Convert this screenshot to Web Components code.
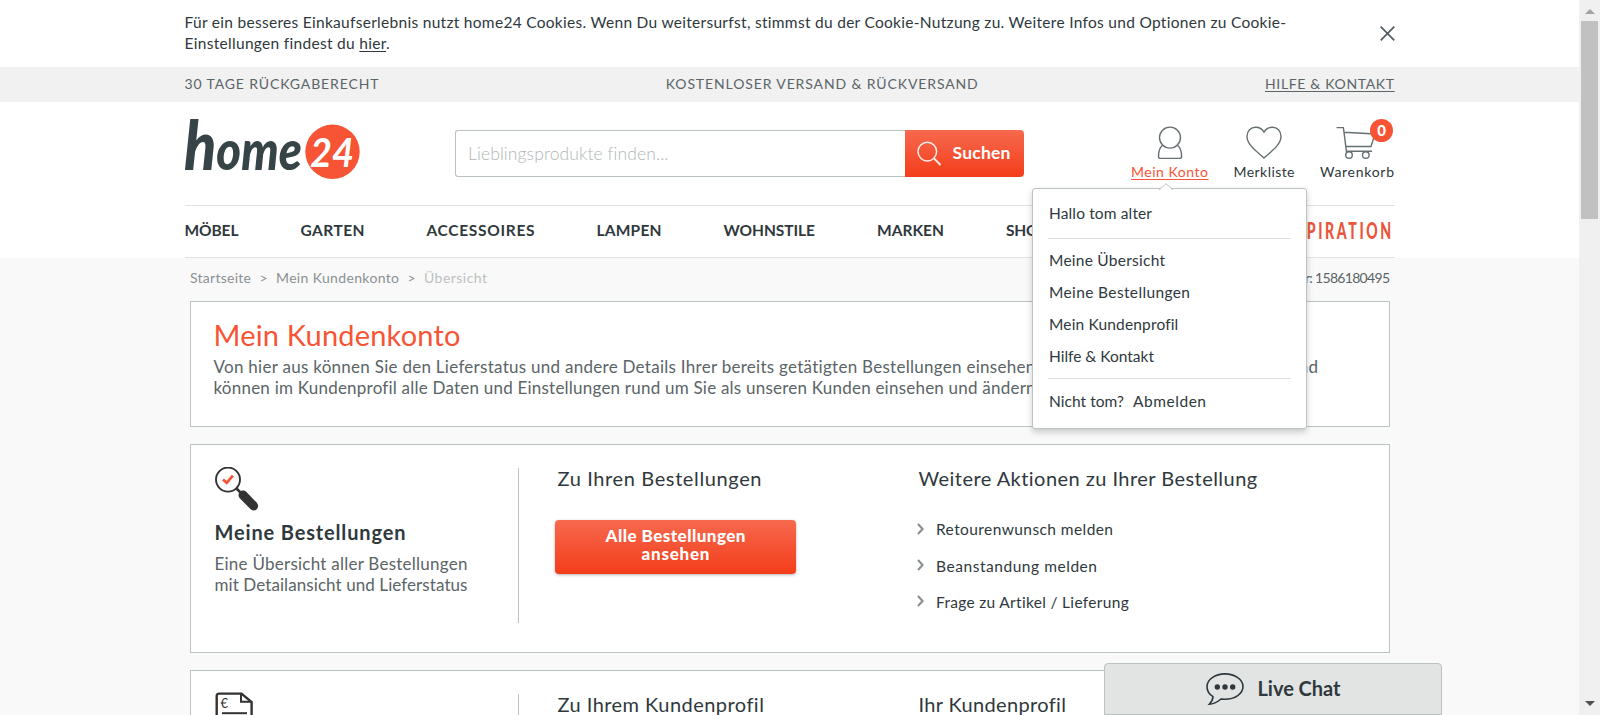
<!DOCTYPE html>
<html lang="de">
<head>
<meta charset="utf-8">
<title>home24 – Mein Kundenkonto</title>
<style>
html,body{margin:0;height:100%;overflow:hidden}
body{font-family:Lato,"Open Sans",sans-serif;color:#2f383c;background:#f9f9f9;font-size:15.5px}
</style>
</head>
<body>
<shop-page></shop-page>
<script>
function element(name, html, init){
  const t=document.createElement('template');
  t.innerHTML=html;
  customElements.define(name, class extends HTMLElement{
    constructor(){super();this.attachShadow({mode:'open'}).appendChild(t.content.cloneNode(true));}
    connectedCallback(){if(init)init(this,this.shadowRoot);}
  });
}

element('shop-page', `
<style>
:host{display:flex;height:715px;overflow:hidden}
main{flex:1;min-width:0;height:715px;overflow:hidden}
live-chat{position:absolute;left:1104px;top:663px}
</style>
<main><cookie-bar></cookie-bar><usp-bar></usp-bar><shop-header></shop-header><shop-nav></shop-nav><account-page></account-page></main>
<page-scrollbar></page-scrollbar>
<live-chat></live-chat>`);

element('page-scrollbar', `
<style>
:host{display:flex;flex-direction:column;align-items:center;justify-content:space-between;width:21px;height:715px;background:#f0f0f0}
.up,.down{width:0;height:0;border:5px solid transparent}
.up{border-top:0;border-bottom-color:#a3a3a3;margin-top:9px}
.down{border-bottom:0;border-top-color:#505050;margin-bottom:9px}
.track{flex:1;padding-top:7px}.thumb{width:17px;height:198px;background:#c1c1c1}
</style><div class="up"></div><div class="track"><div class="thumb"></div></div><div class="down"></div>`);

element('cookie-bar', `
<style>
:host{display:flex;justify-content:space-between;height:67px;box-sizing:border-box;padding:12px 184px 0 184.5px;background:#fff;line-height:21px}
a{text-decoration:underline;text-underline-offset:2px}
svg{margin-top:14px}
</style>
<div><fit-text w="1102">Für ein besseres Einkaufserlebnis nutzt home24 Cookies. Wenn Du weitersurfst, stimmst du der Cookie-Nutzung zu. Weitere Infos und Optionen zu Cookie-</fit-text>
<fit-text w="205">Einstellungen findest du <a>hier</a>.</fit-text></div>
<svg width="15" height="15" viewBox="0 0 15 15"><path d="M.7.7 14.3 14.3M14.3.7.7 14.3" stroke="#535c60" stroke-width="1.7"/></svg>`);

element('usp-bar', `
<style>
:host{display:flex;justify-content:space-between;height:35px;background:#f1f1f1;padding:0 185px 0 184.5px;line-height:34px;font-size:14px;color:#5b6467}
.help{text-decoration:underline;text-underline-offset:2px}
</style>
<fit-text w="194">30 TAGE RÜCKGABERECHT</fit-text><fit-text w="312">KOSTENLOSER VERSAND &amp; RÜCKVERSAND</fit-text><fit-text class="help" w="129">HILFE &amp; KONTAKT</fit-text>`);

element('shop-logo', `
<style>:host{display:block;width:180px;height:80px}svg{overflow:visible}text{font-family:Lato,sans-serif;font-style:italic}</style>
<svg width="180" height="80" viewBox="0 0 180 80">
<text transform="translate(-1,59.5)" fill="#364347" font-weight="900" font-size="55" textLength="118" lengthAdjust="spacingAndGlyphs"><tspan font-size="69">h</tspan>ome</text>
<circle cx="147.500" cy="41.800" r="27.200" fill="#f75435"/>
<text x="125" y="57" font-size="41" font-weight="700" fill="#fff" textLength="44" lengthAdjust="spacingAndGlyphs">24</text>
</svg>`);

element('search-box', `
<style>
:host{display:flex;width:569px;height:47px;line-height:45px}
.in{flex:1;border:1px solid #b9c2c1;border-right:0;border-radius:3px 0 0 3px;padding-left:12px;font-size:17.5px;color:#b0b5b6;font-weight:300}
button{all:unset;box-sizing:border-box;width:119px;display:flex;background:linear-gradient(#f7694e,#f33d1a);border-radius:0 4px 4px 0;color:#fff;font-weight:700;font-size:17.5px;line-height:46px;padding-left:11.5px}
button fit-text{margin-left:11px}svg{margin-top:11px}
</style>
<div class="in"><fit-text w="200">Lieblingsprodukte finden...</fit-text></div>
<button><svg width="25" height="25" viewBox="0 0 25 25" fill="none" stroke="#fff" stroke-width="1.5" opacity=".9"><circle cx="10.3" cy="10.6" r="9.3"/><path d="m17 17.3 6.5 6.7" stroke-width="1.9"/></svg><fit-text w="58">Suchen</fit-text></button>`);

element('header-action', `
<style>
:host{display:flex;flex-direction:column;align-items:center;position:relative;font-size:14px;line-height:18px}
.icon{height:39px}
</style><div class="icon"><slot name="icon"></slot></div><slot></slot><slot name="menu"></slot>`);

element('account-menu', `
<style>
:host{position:absolute;left:-99px;top:64px;width:275px;height:241px;box-sizing:border-box;border:1px solid #bcc4c3;border-radius:3px;background:#fff;box-shadow:0 3px 6px rgba(0,0,0,.2);padding:0 15px;z-index:5;font-size:15.5px;line-height:32px;color:#2f383c}
svg{position:absolute;left:126px;top:-6px}
.hi{padding:8px 0 9px 1px;border-bottom:1px solid #dde0e0}
.links{padding:5px 0 0 1px;height:134px;border-bottom:1px solid #dde0e0}
.out{display:flex;gap:9px;padding:6px 0 0 1px}
</style>
<svg width="14" height="7" viewBox="0 0 14 7"><path d="M0 7 7 .7 14 7" fill="#fff" stroke="#bcc4c3"/></svg>
<div class="hi"><fit-text w="103">Hallo tom alter</fit-text></div>
<div class="links"><fit-text w="116">Meine Übersicht</fit-text><fit-text w="141">Meine Bestellungen</fit-text><fit-text w="129">Mein Kundenprofil</fit-text><fit-text w="105">Hilfe &amp; Kontakt</fit-text></div>
<div class="out"><fit-text w="75">Nicht tom?</fit-text><fit-text w="73">Abmelden</fit-text></div>`);

element('shop-header', `
<style>
:host{display:flex;height:103px;background:#fff;padding:0 185px}
shop-logo{margin-top:8px}
search-box{margin:28px 0 0 90px}
.actions{display:flex;margin:22px 0 0 auto;gap:25.5px}
.on{color:#f75435;text-decoration:underline;text-underline-offset:2px}
.badge{position:absolute;right:1px;top:-5px;width:23px;height:23px;border-radius:50%;background:#f75435;color:#fff;font-weight:900;font-size:15px;line-height:23px;text-align:center}
svg{display:block}
</style>
<shop-logo></shop-logo><search-box></search-box>
<div class="actions">
<header-action>
 <svg slot="icon" width="26" height="38" viewBox="1157 124 26 38" fill="none" stroke="#667073" stroke-width="1.4"><circle cx="1170" cy="137.6" r="10.5"/><path d="M1162.6 145.3C1159.5 147.8 1158.5 151.5 1158.5 156.5Q1158.5 158.4 1160.3 158.4H1179.7Q1181.6 158.4 1181.6 156.5C1181.6 151.5 1180.6 147.8 1177.4 145.3"/></svg>
 <fit-text class="on" w="77">Mein Konto</fit-text><account-menu slot="menu"></account-menu>
</header-action>
<header-action>
 <svg slot="icon" width="38" height="38" viewBox="1245.5 124 38 38" fill="none" stroke="#667073" stroke-width="1.4"><path d="M1264.5 158C1258 152 1247.5 145 1247.5 136.5C1247.5 131 1251.3 127.3 1256 127.3C1260 127.3 1263 129.3 1264.5 132.3C1266 129.3 1269 127.3 1273 127.3C1277.7 127.3 1281.5 131 1281.5 136.5C1281.5 145 1271 152 1264.5 158Z"/></svg>
 <fit-text w="61">Merkliste</fit-text>
</header-action>
<header-action>
 <svg slot="icon" width="42" height="38" viewBox="1337 124 42 38" fill="none" stroke="#667073" stroke-width="1.4"><path d="M1337.6 127.6H1344.4L1347.4 151.2H1373M1345 132.2 1376 134 1372 146.5H1347"/><circle cx="1350" cy="155" r="3.3"/><circle cx="1366.8" cy="155" r="3.3"/></svg>
 <fit-text w="74">Warenkorb</fit-text><div slot="menu" class="badge">0</div>
</header-action>
</div>`);

element('shop-nav', `
<style>
:host{display:block;height:53px;background:#fff;padding:0 184px 0 184.5px}
nav{display:flex;gap:62px;height:51px;border:solid #dfe2e2;border-width:1px 0;font-size:15.5px;font-weight:700;line-height:49px}
svg{margin:12px 3px 0 auto}
</style>
<nav><fit-text w="54">MÖBEL</fit-text><fit-text w="64">GARTEN</fit-text><fit-text w="108">ACCESSOIRES</fit-text><fit-text w="65">LAMPEN</fit-text><fit-text w="91.5">WOHNSTILE</fit-text><fit-text w="67">MARKEN</fit-text><fit-text w="120">SHOP THE LOOK</fit-text>
<svg width="118" height="28" viewBox="0 0 118 28"><text transform="translate(2,21) scale(.64,1)" font-size="22" font-weight="900" fill="#e9563b" font-family="Lato,sans-serif" textLength="180">INSPIRATION</text></svg></nav>`);

element('link-row', `
<style>
:host{display:flex;align-items:center;gap:12px;height:36.4px}
svg{margin:-1px 0 0 0}
</style><svg width="7" height="12" viewBox="0 0 7 12"><path d="m1 1 4.6 5L1 11" fill="none" stroke="#8b9091" stroke-width="2.2"/></svg><slot></slot>`);

element('account-card', `
<style>
:host{display:grid;grid-template-columns:305px 37px 361px 1fr;height:209px;box-sizing:border-box;border:1px solid #bcc4c3;background:#fff;padding:23px;margin-top:17px}
.left{border-right:1px solid #bcc4c3;height:155px;padding-left:.5px}
.mid{grid-column:3}
</style><div class="left"><slot name="left"></slot></div><div class="mid"><slot name="mid"></slot></div><div><slot></slot></div>`);

element('account-page', `
<style>
:host{display:block;padding:0 189px 0 190px;color:#5b6467}
.crumbs{display:flex;justify-content:space-between;height:43px;line-height:39px;font-size:14px}
.path{display:flex;gap:8.5px;color:#8b9294}.last{color:#bcc1c2}
.intro{height:126px;box-sizing:border-box;border:1px solid #bcc4c3;background:#fff;padding:16px 71px 0 22.5px;font-size:17px;line-height:21px}
h1,h2,h3{margin:0;font-weight:400}
h1{color:#f75435;font-size:29px;line-height:34px;margin-bottom:4px}
.row{display:flex;justify-content:space-between}
h2{font-size:20px;line-height:24px;color:#2f383c;margin:-2px 0 2px 1.5px}
h3{font-size:20px;font-weight:700;line-height:24px;color:#2f383c;margin:9px 0 8.5px}
p{margin:0;font-size:17px;line-height:21px}
.btn{display:flex;flex-direction:column;align-items:center;box-sizing:border-box;width:241px;height:54px;margin:30px 0 0 -1px;padding-top:7px;border-radius:4px;background:linear-gradient(#f7694e,#f33d1a);box-shadow:0 1px 3px rgba(0,0,0,.3);color:#fff;font-weight:900;font-size:17px;line-height:18px}
.list{margin-top:21px;color:#2f383c}
svg{display:block}
</style>
<div class="crumbs"><div class="path"><fit-text w="61">Startseite</fit-text><fit-text w="8">&gt;</fit-text><fit-text w="123">Mein Kundenkonto</fit-text><fit-text w="8">&gt;</fit-text><fit-text class="last" w="63">Übersicht</fit-text></div><fit-text w="171">Kundennummer: 1586180495</fit-text></div>
<div class="intro"><h1><fit-text w="247">Mein Kundenkonto</fit-text></h1>
<div class="row"><fit-text w="822">Von hier aus können Sie den Lieferstatus und andere Details Ihrer bereits getätigten Bestellungen einsehen</fit-text><fit-text w="29">und</fit-text></div>
<fit-text w="826">können im Kundenprofil alle Daten und Einstellungen rund um Sie als unseren Kunden einsehen und ändern.</fit-text></div>
<account-card>
<div slot="left"><svg style="margin-top:-1px" width="44" height="44" viewBox="0 0 44 44"><circle cx="13" cy="12.6" r="12" fill="none" stroke="#333" stroke-width="1.9"/><path d="m21 21 5 5" stroke="#333" stroke-width="2.5"/><path d="m28 28 10.6 10.9" stroke="#333" stroke-width="9" stroke-linecap="round"/><path d="m8 12.5 3.7 3.3 6.2-7.2" fill="none" stroke="#f75435" stroke-width="2.8"/></svg>
<h3><fit-text w="191">Meine Bestellungen</fit-text></h3><p><fit-text w="253">Eine Übersicht aller Bestellungen</fit-text><fit-text w="253">mit Detailansicht und Lieferstatus</fit-text></p></div>
<div slot="mid"><h2><fit-text w="204">Zu Ihren Bestellungen</fit-text></h2><div class="btn"><fit-text w="140">Alle Bestellungen</fit-text><fit-text w="68">ansehen</fit-text></div></div>
<h2><fit-text w="339">Weitere Aktionen zu Ihrer Bestellung</fit-text></h2>
<div class="list"><link-row><fit-text w="177">Retourenwunsch melden</fit-text></link-row><link-row><fit-text w="161">Beanstandung melden</fit-text></link-row><link-row><fit-text w="193">Frage zu Artikel / Lieferung</fit-text></link-row></div>
</account-card>
<account-card>
<div slot="left"><svg style="margin-top:-2px" width="40" height="44" viewBox="0 0 40 44" fill="none" stroke="#333" stroke-width="2.4"><path d="M1.7 44V4Q1.7 1.6 4 1.6H26.5L36.6 10V44"/><path d="M26 2V9.8H36" stroke-width="2"/><path d="M7 21.2H32" stroke-width="2"/><text x="5.5" y="15.5" font-size="13" font-family="Lato,sans-serif" fill="#333" stroke="none">€</text></svg></div>
<div slot="mid"><h2><fit-text w="206">Zu Ihrem Kundenprofil</fit-text></h2></div>
<h2><fit-text w="147">Ihr Kundenprofil</fit-text></h2>
</account-card>`);

element('live-chat', `
<style>
:host{display:flex;box-sizing:border-box;width:338px;height:52px;background:#e1e4e3;border:1px solid #b9c2c1;border-radius:4px 4px 0 0;padding:0 0 0 101px;gap:13.5px;font-size:20px;font-weight:700;line-height:49px}
svg{margin-top:9px}
</style><svg width="38" height="33" viewBox="0 0 38 33"><path d="M19 .9C29 .9 37 6.4 37 13.6S29 26.3 19 26.3C17.5 26.3 16.3 26.1 15 26C12 28.5 8.5 31.2 3.3 31.3C5.500 29 7 26.500 7 23.600C3 21.300 1 17.700 1 13.600C1 6.400 9 .9 19 .9Z" fill="none" stroke="#2f383c" stroke-width="1.6"/><g fill="#2f383c"><circle cx="11.3" cy="14" r="2.7"/><circle cx="19" cy="14" r="2.7"/><circle cx="26.7" cy="14" r="2.7"/></g></svg><fit-text w="83">Live Chat</fit-text>`);

/* Single text line tracked out to the width given in "w". */
element('fit-text', `<style>:host{display:block;white-space:nowrap;flex:none}</style><slot></slot>`, el=>{
  const w=+el.getAttribute('w'); el.style.width=w+'px';
  const r=document.createRange(); r.selectNodeContents(el);
  const n=el.textContent.length;
  el.style.letterSpacing='0px';
  if(n>1) el.style.letterSpacing=((w-r.getBoundingClientRect().width)/(n-1))+'px';
});
</script>
</body>
</html>
